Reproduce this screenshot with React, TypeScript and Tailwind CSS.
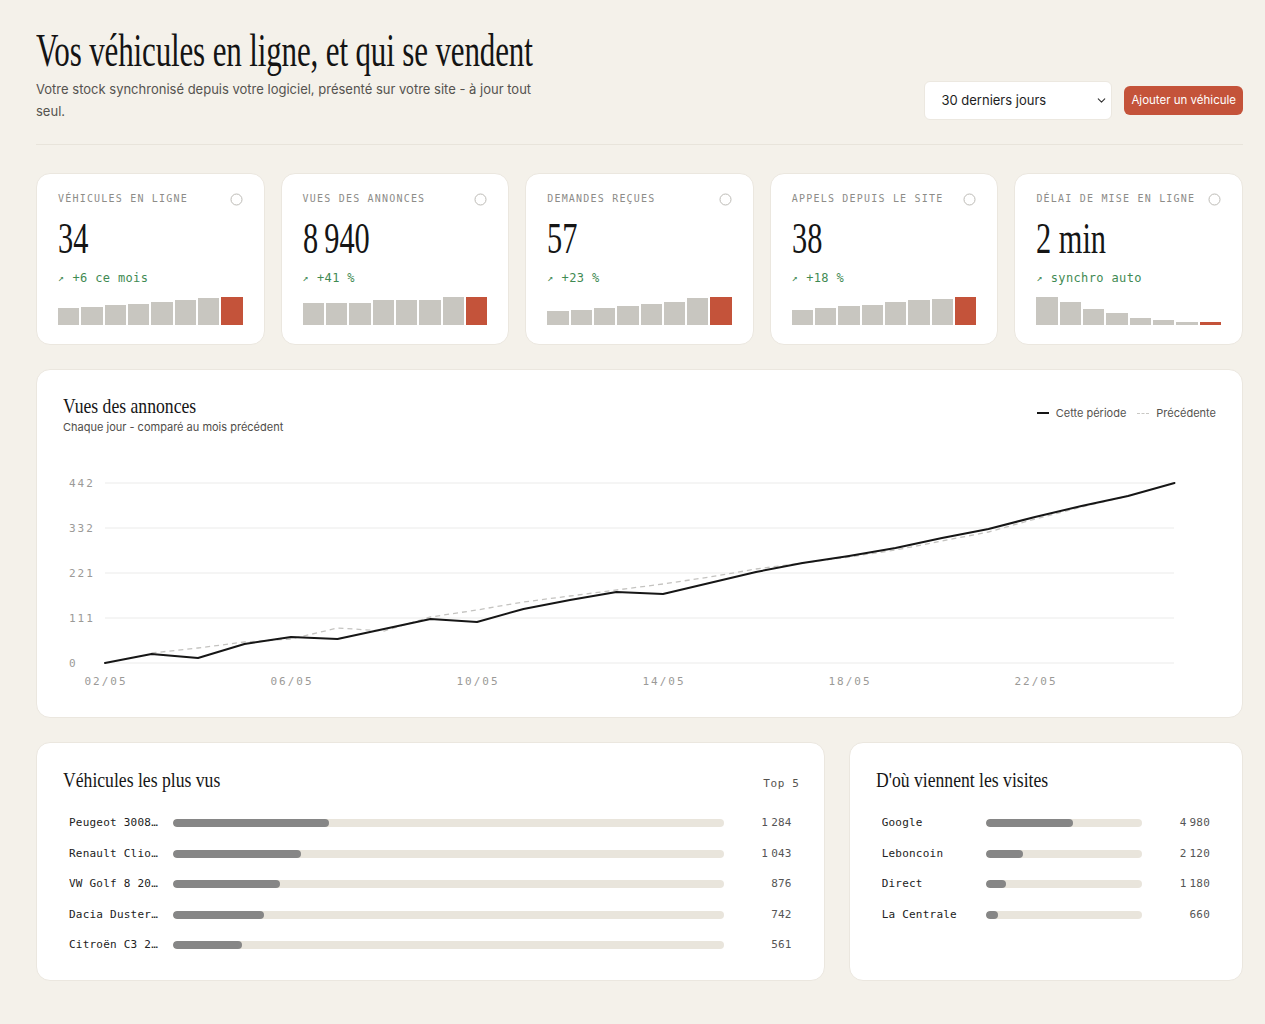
import React from "react";
import { ChevronDown } from "lucide-react";

const NN = "\u202F";

const kpis = [
  { label: "Véhicules en ligne", value: "34", delta: "+6 ce mois", bars: [17, 18, 20, 21, 23, 25, 27, 28] },
  { label: "Vues des annonces", value: `8${NN}940`, delta: "+41 %", bars: [22, 22, 22, 25, 25, 25, 28, 28] },
  { label: "Demandes reçues", value: "57", delta: "+23 %", bars: [14, 15, 17, 19, 21, 23, 27, 28] },
  { label: "Appels depuis le site", value: "38", delta: "+18 %", bars: [15, 17, 19, 20, 23, 25, 26, 28] },
  { label: "Délai de mise en ligne", value: "2 min", delta: "synchro auto", bars: [28, 23, 16, 12, 7, 5, 3, 3] },
];

const topVehicles = [
  { name: "Peugeot 3008 GT", value: `1${NN}284`, pct: 28.4 },
  { name: "Renault Clio V", value: `1${NN}043`, pct: 23.2 },
  { name: "VW Golf 8 2021", value: "876", pct: 19.4 },
  { name: "Dacia Duster 4x4", value: "742", pct: 16.5 },
  { name: "Citroën C3 2020", value: "561", pct: 12.5 },
];

const sources = [
  { name: "Google", value: `4${NN}980`, pct: 56 },
  { name: "Leboncoin", value: `2${NN}120`, pct: 24 },
  { name: "Direct", value: `1${NN}180`, pct: 13 },
  { name: "La Centrale", value: "660", pct: 8 },
];

const solid = [663, 654, 658, 644, 637, 639, 629, 619, 622, 609, 600, 592, 594, 583, 572, 563, 556, 548, 538, 529, 517, 506, 496, 483];
const dashed = [null, 653, 648, 642, 639, 628, 631, 617, 610, 602, 596, 590, 584, 577, 569, 563, 557, 550, 541, 532, 519, 507, 496];

const OX = 63;
const OY = 470;
const xOf = (i: number) => 105 + i * 46.5 - OX;

function Num({ v }: { v: string }) {
  const parts = v.split(NN);
  return (
    <>
      {parts.map((p, i) => (
        <React.Fragment key={i}>
          {i > 0 && <span className="inline-block w-[3px]" />}
          {p}
        </React.Fragment>
      ))}
    </>
  );
}

function CircleIcon() {
  return (
    <svg width="13" height="13" viewBox="0 0 13 13" className="shrink-0">
      <circle cx="6.5" cy="6.5" r="5.5" fill="none" stroke="#bdbbb6" strokeWidth="1" />
    </svg>
  );
}

function KpiCard({ k }: { k: (typeof kpis)[number] }) {
  return (
    <div className="bg-white rounded-[14px] border border-[#ebe7df] px-[21px] pt-[19px] pb-[19px] flex flex-col">
      <div className="flex items-center justify-between h-3">
        <span className="font-['DejaVu_Sans_Mono',monospace] text-[10px] leading-3 tracking-[0.12em] uppercase text-[#8d8c88] whitespace-nowrap">
          {k.label}
        </span>
        <CircleIcon />
      </div>
      <div className="mt-3 h-[44px] whitespace-nowrap">
        <span className="inline-block origin-left scale-x-[0.69] font-['Liberation_Serif',serif] text-[44px] leading-[44px] text-[#151515]">
          {k.value}
        </span>
      </div>
      <div className="mt-[9px] h-4 flex items-center font-['DejaVu_Sans_Mono',monospace] text-[12px] leading-4 tracking-[0.03em] text-[#3f8a52]">
        <span className="text-[10px] mr-[8px]">↗</span>
        <span>{k.delta}</span>
      </div>
      <div className="mt-[11px] h-[28px] flex items-end gap-[2px]">
        {k.bars.map((b, i) => (
          <div
            key={i}
            className={i === k.bars.length - 1 ? "flex-1 bg-[#c4533a]" : "flex-1 bg-[#c8c6c0]"}
            style={{ height: `${b}px` }}
          />
        ))}
      </div>
    </div>
  );
}

function Chart() {
  const gridY = [13, 58, 103, 148, 193];
  const yLabels = ["442", "332", "221", "111", "0"];
  const xLabels = ["02/05", "06/05", "10/05", "14/05", "18/05", "22/05"];
  const solidPts = solid.map((y, i) => `${xOf(i)},${y - OY}`).join(" ");
  const dashedPts = dashed
    .map((y, i) => (y === null ? null : `${xOf(i)},${y - OY}`))
    .filter(Boolean)
    .join(" ");
  return (
    <svg width="1154" height="225" viewBox="0 0 1154 225" className="block font-['DejaVu_Sans_Mono',monospace]">
      {gridY.map((y, i) => (
        <line key={i} x1={42} x2={1111} y1={y} y2={y} stroke="#ebebea" strokeWidth="1" />
      ))}
      {yLabels.map((t, i) => (
        <text key={t} x={6} y={gridY[i] + 4} fontSize="11" fill="#9b9a97" letterSpacing="2">
          {t}
        </text>
      ))}
      {xLabels.map((t, i) => (
        <text key={t} x={xOf(i * 4) + 1} y={215} fontSize="11" fill="#9b9a97" letterSpacing="2" textAnchor="middle">
          {t}
        </text>
      ))}
      <polyline points={dashedPts} fill="none" stroke="#c4c3c0" strokeWidth="1.3" strokeDasharray="5 4" />
      <polyline points={solidPts} fill="none" stroke="#161616" strokeWidth="2" strokeLinejoin="round" strokeLinecap="round" />
    </svg>
  );
}

function BarRow({ name, value, pct }: { name: string; value: string; pct: number }) {
  return (
    <div className="grid grid-cols-[92px_1fr_56px] gap-x-3 items-center h-[14px] px-1.5">
      <span className="font-['DejaVu_Sans_Mono',monospace] text-[11px] leading-[14px] tracking-[0.02em] text-[#222] truncate">
        {name}
      </span>
      <div className="h-2 rounded-full bg-[#e9e5dc] overflow-hidden">
        <div className="h-full rounded-full bg-[#868686]" style={{ width: `${pct}%` }} />
      </div>
      <span className="font-['DejaVu_Sans_Mono',monospace] text-[11px] leading-[14px] tracking-[0.02em] text-[#555] text-right whitespace-nowrap">
        <Num v={value} />
      </span>
    </div>
  );
}

function CardTitle({ children }: { children: React.ReactNode }) {
  return (
    <div className="h-[26px] whitespace-nowrap">
      <span className="inline-block origin-left scale-x-[0.84] font-['Liberation_Serif',serif] text-[21px] leading-[26px] text-[#151515]">
        {children}
      </span>
    </div>
  );
}

export default function App() {
  return (
    <div className="min-h-screen bg-[#f4f1ea] pl-9 pr-[22px] pt-7 pb-10 font-['Inter',sans-serif] text-[#1a1a1a]">
      {/* Header */}
      <div className="flex items-end justify-between">
        <div className="w-[545px]">
          <h1 className="h-[46px] whitespace-nowrap">
            <span className="inline-block origin-left scale-x-[0.675] font-['Liberation_Serif',serif] text-[46px] leading-[46px] tracking-[-0.005em] text-[#141414]">
              Vos véhicules en ligne, et qui se vendent
            </span>
          </h1>
          <p className="mt-1 text-[13px] leading-[22px] text-[#55534f] w-[510px]">
            Votre stock synchronisé depuis votre logiciel, présenté sur votre site - à jour tout seul.
          </p>
        </div>
        <div className="flex items-center gap-3 pb-[2px]">
          <div className="w-[188px] h-[39px] bg-white rounded-md border border-[#ece8e0] flex items-center justify-between pl-4 pr-[3px]">
            <span className="text-[13px] text-[#1d1d1d]">30 derniers jours</span>
            <ChevronDown size={13} strokeWidth={2} className="text-[#333]" />
          </div>
          <button className="h-[29px] px-[7px] rounded-md bg-[#c4533a] text-white text-[11.5px]">
            Ajouter un véhicule
          </button>
        </div>
      </div>

      <div className="mt-[22px] h-px bg-[#e8e4db]" />

      {/* KPI cards */}
      <div className="mt-7 grid grid-cols-5 gap-4">
        {kpis.map((k) => (
          <KpiCard key={k.label} k={k} />
        ))}
      </div>

      {/* Chart card */}
      <div className="mt-6 bg-white rounded-[14px] border border-[#ebe7df] pt-[23px] pb-[22px] px-[26px]">
        <div className="flex items-start justify-between">
          <div>
            <CardTitle>Vues des annonces</CardTitle>
            <div className="text-[11px] leading-[14px] text-[#4f4d49] mt-[1px]">Chaque jour - comparé au mois précédent</div>
          </div>
          <div className="mt-[13px] flex items-center gap-[7px] text-[11px] leading-[14px] text-[#55534f]">
            <span className="inline-block w-3 h-[2px] bg-[#161616]" />
            <span>Cette période</span>
            <span className="inline-block w-3 ml-1 border-t border-dashed border-[#c9c8c4]" />
            <span>Précédente</span>
          </div>
        </div>
        <div className="mt-9">
          <Chart />
        </div>
      </div>

      {/* Bottom */}
      <div className="mt-6 grid grid-cols-[2fr_1fr] gap-6">
        <div className="bg-white rounded-[14px] border border-[#ebe7df] pt-6 pb-[28px] px-[26px]">
          <div className="flex items-baseline justify-between">
            <CardTitle>Véhicules les plus vus</CardTitle>
            <span className="font-['DejaVu_Sans_Mono',monospace] text-[11px] tracking-[0.06em] text-[#55534f] mr-[-2px]">Top 5</span>
          </div>
          <div className="mt-[23px] flex flex-col gap-[16.5px]">
            {topVehicles.map((v) => (
              <BarRow key={v.name} {...v} />
            ))}
          </div>
        </div>
        <div className="bg-white rounded-[14px] border border-[#ebe7df] pt-6 pb-[28px] px-[26px]">
          <CardTitle>D'où viennent les visites</CardTitle>
          <div className="mt-[23px] flex flex-col gap-[16.5px]">
            {sources.map((v) => (
              <BarRow key={v.name} {...v} />
            ))}
          </div>
        </div>
      </div>
    </div>
  );
}
